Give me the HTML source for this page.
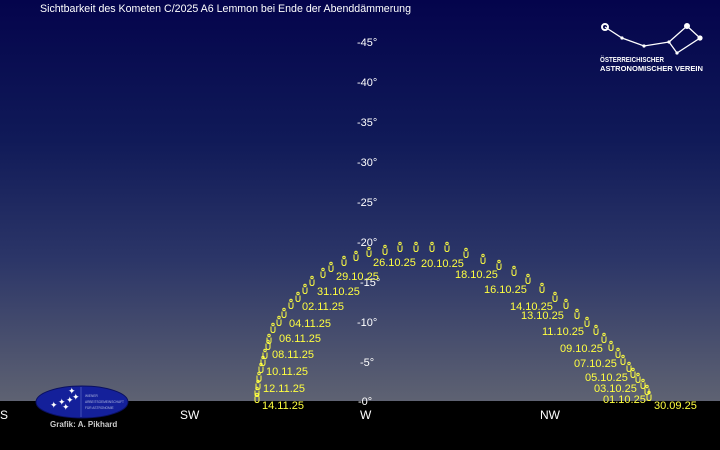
<!DOCTYPE html>
<html><head><meta charset="utf-8"><style>
html,body{margin:0;padding:0;background:#000;}
svg{display:block;}
text{font-family:"Liberation Sans",sans-serif;}
</style></head><body>
<svg width="720" height="450" viewBox="0 0 720 450" xmlns="http://www.w3.org/2000/svg">
<defs>
<linearGradient id="sky" x1="0" y1="0" x2="0" y2="1">
<stop offset="0" stop-color="#04044c"/>
<stop offset="0.35" stop-color="#101a58"/>
<stop offset="0.65" stop-color="#2c3668"/>
<stop offset="1" stop-color="#5e6272"/>
</linearGradient>
<g id="c"><circle cx="0" cy="-3.5" r="1.2" fill="none" stroke="#ffff40" stroke-width="1"/><path d="M-2,-1.5V2.5Q-2,4.5 0,4.5Q2,4.5 2,2.5V-1.5" fill="none" stroke="#ffff40" stroke-width="1"/></g>
</defs>
<rect width="720" height="401" fill="url(#sky)"/>
<rect y="401" width="720" height="49" fill="#000"/>
<text x="40" y="12" fill="#fff" font-size="11" textLength="371" lengthAdjust="spacingAndGlyphs">Sichtbarkeit des Kometen C/2025 A6 Lemmon bei Ende der Abenddämmerung</text>
<g fill="#fff" font-size="11">
<text x="357" y="46">-45°</text><text x="357" y="86">-40°</text><text x="357" y="126">-35°</text>
<text x="357" y="166">-30°</text><text x="357" y="206">-25°</text><text x="357" y="246">-20°</text>
<text x="360" y="286">-15°</text><text x="357" y="326">-10°</text><text x="360" y="366">-5°</text>
<text x="358" y="405">-0°</text>
<text x="0" y="419" font-size="12">S</text><text x="180" y="419" font-size="12">SW</text>
<text x="360" y="419" font-size="12">W</text><text x="540" y="419" font-size="12">NW</text>
</g>
<g>
<use href="#c" x="257" y="398"/><use href="#c" x="257" y="392"/><use href="#c" x="258" y="385"/><use href="#c" x="259" y="377"/>
<use href="#c" x="261" y="368"/><use href="#c" x="263" y="361"/><use href="#c" x="265" y="354"/><use href="#c" x="268" y="345"/>
<use href="#c" x="269" y="339"/><use href="#c" x="273" y="328"/><use href="#c" x="279" y="321"/><use href="#c" x="284" y="313"/>
<use href="#c" x="291" y="304"/><use href="#c" x="298" y="297"/><use href="#c" x="305" y="289"/><use href="#c" x="312" y="281"/>
<use href="#c" x="323" y="273"/><use href="#c" x="331" y="267"/><use href="#c" x="344" y="261"/><use href="#c" x="356" y="256"/>
<use href="#c" x="369" y="252"/><use href="#c" x="385" y="250"/><use href="#c" x="400" y="247"/><use href="#c" x="416" y="247"/>
<use href="#c" x="432" y="247"/><use href="#c" x="447" y="247"/><use href="#c" x="466" y="253"/><use href="#c" x="483" y="259"/>
<use href="#c" x="499" y="265"/><use href="#c" x="514" y="271"/><use href="#c" x="528" y="279"/><use href="#c" x="542" y="288"/>
<use href="#c" x="555" y="297"/><use href="#c" x="566" y="304"/><use href="#c" x="577" y="314"/><use href="#c" x="587" y="322"/>
<use href="#c" x="596" y="330"/><use href="#c" x="604" y="338"/><use href="#c" x="611" y="346"/><use href="#c" x="618" y="353"/>
<use href="#c" x="623" y="360"/><use href="#c" x="629" y="367"/><use href="#c" x="633" y="373"/><use href="#c" x="638" y="378"/>
<use href="#c" x="643" y="384"/><use href="#c" x="647" y="390"/><use href="#c" x="649" y="396"/>
</g>
<g fill="#ffff40" font-size="11">
<text x="373" y="266">26.10.25</text><text x="421" y="267">20.10.25</text><text x="455" y="278">18.10.25</text>
<text x="484" y="293">16.10.25</text><text x="510" y="310">14.10.25</text><text x="521" y="319">13.10.25</text>
<text x="542" y="335">11.10.25</text><text x="560" y="352">09.10.25</text><text x="574" y="367">07.10.25</text>
<text x="585" y="381">05.10.25</text><text x="594" y="392">03.10.25</text><text x="603" y="403">01.10.25</text>
<text x="654" y="409">30.09.25</text>
<text x="336" y="280">29.10.25</text><text x="317" y="295">31.10.25</text><text x="302" y="310">02.11.25</text>
<text x="289" y="327">04.11.25</text><text x="279" y="342">06.11.25</text><text x="272" y="358">08.11.25</text>
<text x="266" y="375">10.11.25</text><text x="263" y="392">12.11.25</text><text x="262" y="409">14.11.25</text>
</g>
<!-- WAA logo -->
<ellipse cx="82" cy="402" rx="46" ry="16" fill="#14209a" stroke="#0a1060"/>
<line x1="81" y1="387" x2="81" y2="417" stroke="#5060c0" stroke-width="0.8"/>
<g fill="#fff" font-size="9"><text x="50" y="408">✦</text><text x="58" y="405">✦</text><text x="66" y="403">✦</text><text x="68" y="394">✦</text><text x="62" y="410">✦</text><text x="72" y="400">✦</text></g>
<g fill="#b0b8e0" font-size="3.2"><text x="85" y="397">WIENER</text><text x="85" y="403">ARBEITSGEMEINSCHAFT</text><text x="85" y="409">FÜR ASTRONOMIE</text></g>
<text x="50" y="427" fill="#ccc" font-size="8" font-weight="bold">Grafik: A. Pikhard</text>
<!-- OEAV logo -->
<g stroke="#fff" stroke-width="1.3" fill="none">
<polyline points="605,27 622,38 644,46 669,42"/>
<polygon points="669,42 687,26 700,38 677,53"/>
<circle cx="605" cy="27" r="3" stroke-width="2"/>
</g>
<g fill="#fff">
<circle cx="622" cy="38" r="1.6"/><circle cx="644" cy="46" r="1.6"/><circle cx="669" cy="42" r="1.6"/>
<circle cx="687" cy="26" r="3"/><circle cx="700" cy="38" r="2.6"/><circle cx="677" cy="53" r="1.6"/>
</g>
<g fill="#fff" font-size="7" font-weight="bold"><text x="600" y="62" textLength="64" lengthAdjust="spacingAndGlyphs">ÖSTERREICHISCHER</text><text x="600" y="71" textLength="103" lengthAdjust="spacingAndGlyphs">ASTRONOMISCHER VEREIN</text></g>
</svg>
</body></html>
